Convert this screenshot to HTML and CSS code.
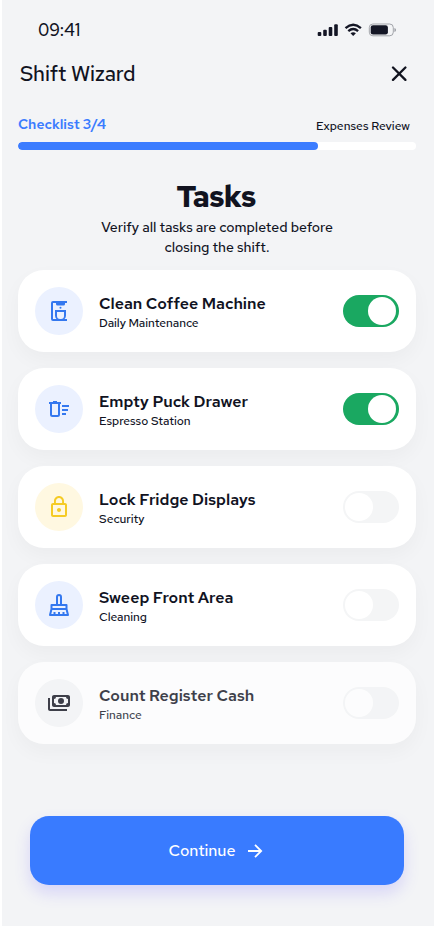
FILE: index.html
```html
<!DOCTYPE html>
<html lang="en">
<head>
<meta charset="utf-8">
<title>Shift Wizard</title>
<link rel="stylesheet" href="styles.css">
</head>
<body>
<main class="screen">
  <div class="status">
    <span class="time">09:41</span>
    <svg class="status-icons" width="80" height="14" viewBox="0 0 80 14" fill="#141625">
      <rect x="0.7" y="9" width="3.6" height="4" rx="1"/><rect x="6.2" y="6.8" width="3.6" height="6.2" rx="1"/><rect x="11.7" y="4" width="3.6" height="9" rx="1"/><rect x="17.2" y="1.3" width="3.6" height="11.7" rx="1"/>
      <g fill="none" stroke="#141625" stroke-width="2.4"><path d="M28.5 5.1Q36.2-1.5 43.9 5.1"/><path d="M31.3 8.1Q36.2 3.9 41.1 8.1"/></g>
      <path d="M33.5 10.3Q36.2 8.2 38.9 10.3L36.2 13z"/>
      <rect x="52.3" y="1" width="24" height="11.8" rx="3.6" fill="none" stroke="#a2a4aa"/>
      <rect x="53.7" y="2.3" width="17.2" height="9.2" rx="2.3"/><path d="M77.5 5v4q1.4-.6 1.4-2T77.500 5z" fill="#8b8d95"/>
    </svg>
  </div>
  <header class="header">
    <h1 class="title">Shift Wizard</h1>
    <svg width="16" height="16" viewBox="0 0 16 16" fill="none" stroke="#11131f" stroke-width="2.3" stroke-linecap="round"><path d="M2 1.500l12.400 12.400M14.400 1.500L2 13.900"/></svg>
  </header>
  <section class="progress">
    <div class="progress-labels"><span class="step">Checklist 3/4</span><span class="next">Expenses Review</span></div>
    <div class="track"><div class="fill"></div></div>
  </section>
  <section class="intro">
    <h2 class="heading">Tasks</h2>
    <p class="lead">Verify all tasks are completed before<br>closing the shift.</p>
  </section>
  <section class="tasks">
    <article class="card">
      <div class="icon"><svg width="24" height="24" viewBox="0 0 24 24" fill="#3478ef"><path d="M6 2h14v2h-2v1a1.500 1.500 0 0 1-1.500 1.500h-6A1.500 1.500 0 0 1 9 5V4H6v16h3.500A5 5 0 0 1 8 16.500V11h11v5.500a5 5 0 0 1-1.500 3.500H20v2H6a2 2 0 0 1-2-2V4a2 2 0 0 1 2-2z"/><path d="M10 13v4a3 3 0 0 0 3 3h1a3 3 0 0 0 3-3v-4z" fill="#ebf1ff"/><circle cx="13.500" cy="8.800" r="1"/></svg></div>
      <div class="copy"><h3 class="name">Clean Coffee Machine</h3><p class="type">Daily Maintenance</p></div>
      <div class="switch on"></div>
    </article>
    <article class="card">
      <div class="icon"><svg width="24" height="24" viewBox="0 0 24 24" fill="none" stroke="#3478ef" stroke-width="2"><path d="M2 6h12M6 5h4M4 7v10.500q0 1.500 1.500 1.500h5q1.500 0 1.500-1.500V7M15 9h7M15 13h6M15 17h4"/></svg></div>
      <div class="copy"><h3 class="name">Empty Puck Drawer</h3><p class="type">Espresso Station</p></div>
      <div class="switch on"></div>
    </article>
    <article class="card">
      <div class="icon yellow"><svg width="24" height="24" viewBox="0 0 24 24" fill="#f5cb25"><path d="M12 17c1.100 0 2-.9 2-2s-.9-2-2-2-2 .9-2 2 .9 2 2 2zm6-9h-1V6c0-2.760-2.240-5-5-5S7 3.240 7 6v2H6c-1.100 0-2 .9-2 2v10c0 1.100.9 2 2 2h12c1.100 0 2-.9 2-2V10c0-1.100-.9-2-2-2zM8.900 6c0-1.710 1.390-3.100 3.100-3.100s3.100 1.390 3.100 3.100v2H8.900zM18 20H6V10h12z"/></svg></div>
      <div class="copy"><h3 class="name">Lock Fridge Displays</h3><p class="type">Security</p></div>
      <div class="switch"></div>
    </article>
    <article class="card">
      <div class="icon"><svg width="24" height="24" viewBox="0 0 24 24" fill="none" stroke="#3478ef" stroke-width="2" stroke-linejoin="round"><path d="M10 12V4a2 2 0 0 1 4 0v8M4.500 12h15v4h-15zM4.500 16l-1.500 6h18l-1.500-6M7.500 22v-3M12 22v-3M16.500 22v-3"/></svg></div>
      <div class="copy"><h3 class="name">Sweep Front Area</h3><p class="type">Cleaning</p></div>
      <div class="switch"></div>
    </article>
    <article class="card muted">
      <div class="icon grey"><svg width="24" height="24" viewBox="0 0 24 24" fill="#11131f"><path fill-rule="evenodd" d="M6 4h15c1.100 0 2 .9 2 2v8c0 1.100-.9 2-2 2H7c-1.100 0-2-.9-2-2V6c0-1.100.9-2 2-2zm3 2a2 2 0 0 1-2 2v4a2 2 0 0 1 2 2h10a2 2 0 0 1 2-2V8a2 2 0 0 1-2-2z"/><circle cx="14" cy="10" r="3"/><path d="M1 7h2v11h17v2H3c-1.100 0-2-.9-2-2z"/></svg></div>
      <div class="copy"><h3 class="name">Count Register Cash</h3><p class="type">Finance</p></div>
      <div class="switch"></div>
    </article>
  </section>
  <button class="continue"><span>Continue</span><svg width="16" height="16" viewBox="0 0 16 16" fill="none" stroke="#fff" stroke-width="1.800"><path d="M1 8h13M8 1.800L14.200 8 8 14.200"/></svg></button>
</main>
</body>
</html>
```

FILE: styles.css
```css
* { box-sizing: border-box; }
body { margin: 0; background: #fff; color: #11131f; font-family: "Red Hat Text", "Red Hat Display", Inter, "Liberation Sans", sans-serif; font-weight: 500; }
h1, h2, h3, p { margin: 0; }
svg { display: block; flex: none; }
.screen { margin-left: 2px; width: 432px; height: 926px; background: #f3f4f6; padding: 18px 18px 0 16px; display: flex; flex-direction: column; }
.status { height: 24px; display: flex; justify-content: space-between; align-items: center; padding: 0 19px 0 20px; }
.time { font-size: 17px; line-height: 24px; }
.header { height: 34px; margin-top: 15px; padding: 0 9px 0 2px; display: flex; justify-content: space-between; align-items: center; }
.title { font-size: 21px; font-weight: 500; line-height: 30px; letter-spacing: -.14px; }
.progress { margin-top: 23px; }
.progress-labels { height: 20px; display: flex; justify-content: space-between; padding-right: 6px; }
.step { color: #3b7cff; font-weight: 600; font-size: 14px; line-height: 20px; }
.next { font-size: 12px; line-height: 24px; }
.track { height: 8px; margin-top: 8px; border-radius: 4px; background: #fff; overflow: hidden; }
.fill { width: 300px; height: 8px; border-radius: 4px; background: #3b7cff; }
.intro { height: 120px; padding-top: 27px; text-align: center; }
.heading { font-size: 30px; line-height: 38px; font-weight: 700; letter-spacing: -.8px; padding-right: 2px; }
.lead { font-size: 14px; line-height: 20px; padding-top: 2px; letter-spacing: -.03px; }
.tasks { display: flex; flex-direction: column; gap: 16px; }
.card { height: 82px; padding: 0 17px; border-radius: 26px; background: #fff; box-shadow: 0 8px 20px rgba(0, 0, 0, .035); display: flex; align-items: center; }
.muted { opacity: .8; }
.icon { width: 48px; height: 48px; border-radius: 50%; background: #ebf1ff; display: grid; place-items: center; }
.yellow { background: #fff8e1; }
.grey { background: #f3f4f6; }
.copy { flex: 1; margin-left: 16px; padding-top: 2px; }
.name { font-size: 16px; line-height: 20px; font-weight: 600; white-space: nowrap; }
.type { font-size: 12px; line-height: 16px; margin-top: 1px; letter-spacing: -.06px; }
.switch { width: 56px; height: 32px; border-radius: 16px; padding: 2px; background: #f4f5f6; display: flex; }
.switch::before { content: ""; width: 28px; height: 28px; border-radius: 50%; background: #fff; }
.switch.on { background: #1aa861; justify-content: flex-end; padding-right: 3px; }
.continue { height: 69px; margin: 72px 12px 0 12px; padding: 0 2px 0 0; border: 0; border-radius: 19px; background: #397bff; color: #fff; font: 500 16px/24px "Red Hat Text", "Red Hat Display", Inter, sans-serif; box-shadow: 0 8px 16px rgba(90, 70, 255, .18); display: flex; justify-content: center; align-items: center; gap: 12px; }
```
